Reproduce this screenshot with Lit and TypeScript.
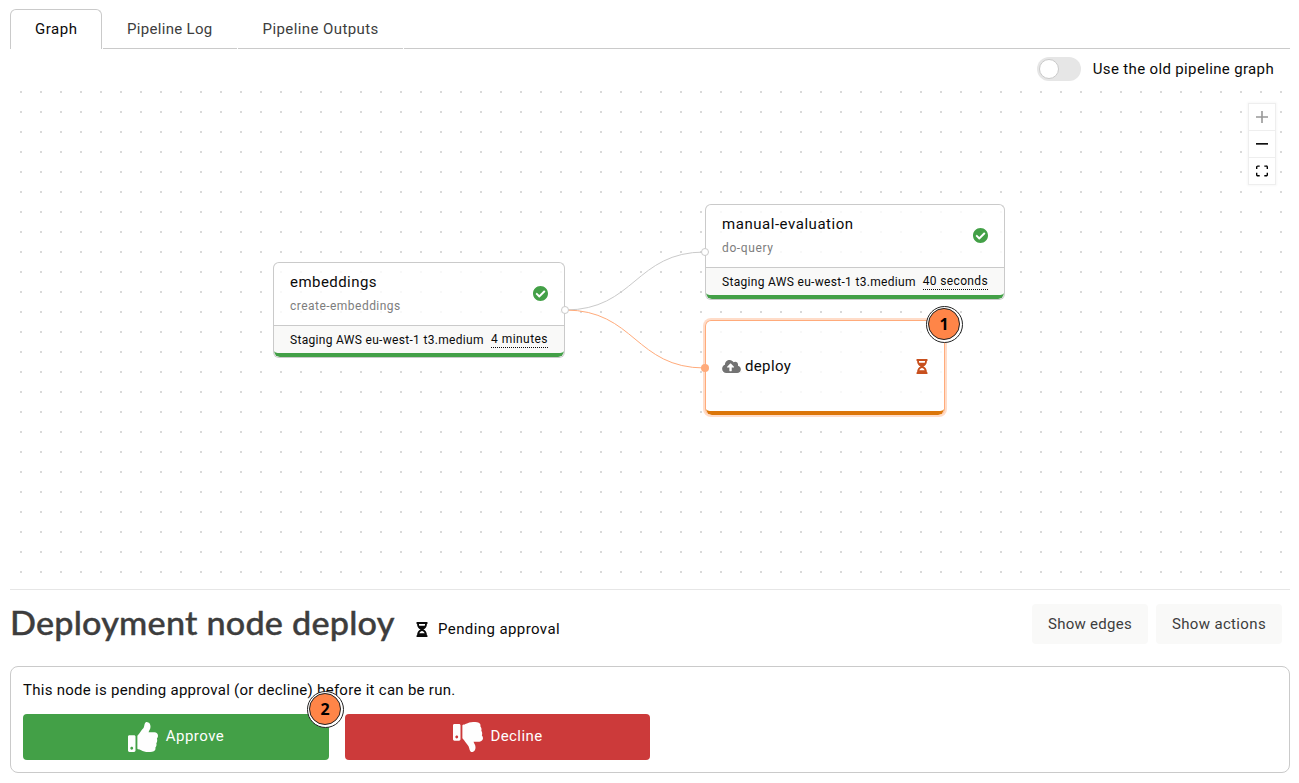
import { LitElement, html, css, svg } from "lit";
import { customElement } from "lit/decorators.js";

const CHECK = "M504 256c0 136.967-111.033 248-248 248S8 392.967 8 256 119.033 8 256 8s248 111.033 248 248zM227.314 387.314l184-184c6.248-6.248 6.248-16.379 0-22.627l-22.627-22.627c-6.248-6.249-16.379-6.249-22.628 0L216 308.118l-70.059-70.059c-6.248-6.248-16.379-6.248-22.628 0l-22.627 22.627c-6.248 6.248-6.248 16.379 0 22.627l104 104c6.249 6.249 16.379 6.249 22.628.001z";
const HOURGLASS = "M360 0H24C10.745 0 0 10.745 0 24v16c0 13.255 10.745 24 24 24 0 90.965 51.016 167.734 120.842 192C75.016 280.266 24 357.035 24 448c-13.255 0-24 10.745-24 24v16c0 13.255 10.745 24 24 24h336c13.255 0 24-10.745 24-24v-16c0-13.255-10.745-24-24-24 0-90.965-51.016-167.734-120.842-192C308.984 231.734 360 154.965 360 64c13.255 0 24-10.745 24-24V24c0-13.255-10.745-24-24-24zm-75.078 384H99.08c17.059-46.797 52.096-80 92.92-80 40.821 0 75.862 33.196 92.922 80zm.019-256H99.078C91.988 108.548 88 86.748 88 64h208c0 22.805-3.987 44.587-11.059 64z";
const CLOUD = "M537.6 226.6c4.1-10.7 6.4-22.4 6.4-34.6 0-53-43-96-96-96-19.7 0-38.1 6-53.3 16.2C367 64.2 315.3 32 256 32c-88.4 0-160 71.6-160 160 0 2.7.1 5.4.2 8.1C40.2 219.8 0 273.2 0 336c0 79.5 64.5 144 144 144h368c70.7 0 128-57.3 128-128 0-61.9-44-113.6-102.4-125.4zM393.4 288H328v112c0 8.8-7.2 16-16 16h-48c-8.8 0-16-7.2-16-16V288h-65.4c-14.3 0-21.4-17.2-11.3-27.3l105.4-105.4c6.2-6.2 16.4-6.2 22.6 0l105.4 105.4c10.1 10.1 2.9 27.3-11.3 27.3z";
const UP = "M104 224H24c-13.255 0-24 10.745-24 24v240c0 13.255 10.745 24 24 24h80c13.255 0 24-10.745 24-24V248c0-13.255-10.745-24-24-24zM64 472c-13.255 0-24-10.745-24-24s10.745-24 24-24 24 10.745 24 24-10.745 24-24 24zM384 81.452c0 42.416-25.97 66.208-33.277 94.548h101.723c33.397 0 59.397 27.746 59.553 58.098.084 17.938-7.546 37.249-19.439 49.197l-.11.11c9.836 23.337 8.237 56.037-9.308 79.469 8.681 25.895-.069 57.704-16.382 74.757 4.298 17.598 2.244 32.575-6.148 44.632C440.202 511.587 389.616 512 346.839 512l-2.845-.001c-48.287-.017-87.806-17.598-119.56-31.725-15.957-7.099-36.821-15.887-52.651-16.178-6.54-.12-11.783-5.457-11.783-11.998v-213.77c0-3.2 1.282-6.271 3.558-8.521 39.614-39.144 56.648-80.587 89.117-113.111 14.804-14.832 20.188-37.236 25.393-58.902C282.515 39.293 291.817 0 312 0c24 0 72 8 72 81.452z";
const DOWN = "M0 56v240c0 13.255 10.745 24 24 24h80c13.255 0 24-10.745 24-24V56c0-13.255-10.745-24-24-24H24C10.745 32 0 42.745 0 56zm40 200c0-13.255 10.745-24 24-24s24 10.745 24 24-10.745 24-24 24-24-10.745-24-24zm272 256c-20.183 0-29.485-39.293-33.931-57.795-5.206-21.666-10.589-44.07-25.393-58.902-32.469-32.524-49.503-73.967-89.117-113.111a11.98 11.98 0 0 1-3.558-8.521V59.901c0-6.541 5.243-11.878 11.783-11.998 15.831-.29 36.694-9.079 52.651-16.178C256.189 17.598 295.709.017 343.995 0h2.844c42.777 0 93.363.413 113.774 29.737 8.392 12.057 10.446 27.034 6.148 44.632 16.312 17.053 25.063 48.863 16.382 74.757 17.544 23.432 19.143 56.132 9.308 79.469l.11.11c11.893 11.949 19.523 31.259 19.439 49.197-.156 30.352-26.157 58.098-59.553 58.098H350.723C358.03 364.34 384 388.132 384 430.548 384 504 336 512 312 512z";
const PLUS = "M32 18.133H18.133V32h-4.266V18.133H0v-4.266h13.867V0h4.266v13.867H32z";
const MINUS = "M0 0h32v4.2H0z";
const FIT = "M3.692 4.63c0-.53.4-.938.939-.938h5.215V0H4.708C2.13 0 0 2.054 0 4.63v5.216h3.692V4.631zM27.354 0h-5.2v3.692h5.17c.53 0 .984.4.984.939v5.215H32V4.631A4.624 4.624 0 0027.354 0zm.954 24.83c0 .532-.4.94-.939.94h-5.215v3.768h5.215c2.577 0 4.631-2.13 4.631-4.707v-5.139h-3.692v5.139zm-23.677.94c-.531 0-.939-.4-.939-.94v-5.138H0v5.139c0 2.577 2.13 4.707 4.708 4.707h5.138V25.77H4.631z";

const icon = (d: string, box: string, cls: string) =>
  html`<svg class="icon ${cls}" viewBox=${box}>${svg`<path d=${d}></path>`}</svg>`;

@customElement("app-root")
export class AppRoot extends LitElement {
  static styles = css`
    :host { display: flex; flex-direction: column; height: 783px; box-sizing: border-box; padding: 9px 9px 0 10px; background: #fff; color: #0a0a0a; font: 15px/20px Roboto, "Open Sans", sans-serif; overflow: hidden; }
    * { box-sizing: border-box; }
    .icon { display: block; fill: currentColor; flex: none; }
    .t { white-space: nowrap; letter-spacing: 0.35px; }
    .graph { letter-spacing: 0.55px; }
    .tlog { letter-spacing: 0.31px; }
    .tout { letter-spacing: 0.41px; }
    .n1 { letter-spacing: 0.45px; }
    .n2 { letter-spacing: 0.54px; }
    .s1 { letter-spacing: 0.47px; }
    .s2 { letter-spacing: 0.62px; }
    .env { letter-spacing: 0.31px; }
    .d1 { letter-spacing: 0.45px; }
    .pend { letter-spacing: 0.41px; }
    .edges { letter-spacing: 0.27px; }
    .note { letter-spacing: 0.28px; }
    .yes { letter-spacing: 0.5px; }
    .dec { letter-spacing: 0.4px; }

    .tabs { display: flex; height: 40px; flex: none; }
    .tab { padding: 10px 24px; color: #3d3d3d; border-bottom: 1px solid #cacaca; margin-right: 1px; white-space: nowrap; }
    .tab.active { color: #0a0a0a; border: 1px solid #cacaca; border-bottom: 0; border-radius: 6px 6px 0 0; width: 92px; padding: 9px 24px; }
    .tab.log { width: 134px; }
    .tab.out { width: 165px; padding-left: 24.6px; padding-right: 20px; }
    .rest { flex: 1; border-bottom: 1px solid #cacaca; }
    .bar { display: flex; justify-content: flex-end; align-items: center; height: 40px; flex: none; padding-right: 16px; gap: 12px; }
    .switch { width: 44px; height: 24px; border-radius: 12px; background: #e6e6e6; padding: 2px; }
    .knob { width: 20px; height: 20px; border-radius: 50%; background: #fff; border: 1px solid #cacaca; }

    .canvas { position: relative; height: 501px; flex: none; border-bottom: 1px solid #e6e6e6; }
    .flow { position: absolute; inset: 0; width: 100%; height: 100%; }
    .ports { pointer-events: none; }
    .node { position: absolute; height: 95px; border: 1px solid #cacaca; border-bottom: 0; border-radius: 6px; background: rgba(255, 255, 255, 0.8); display: flex; flex-direction: column; overflow: hidden; box-shadow: 0 1px 0 #cacaca; }
    .node.embed { left: 263px; top: 173px; width: 292px; }
    .node.eval { left: 695px; top: 115px; width: 300px; }
    .node.deploy { left: 695px; top: 231px; width: 240px; border-color: #ffab7b; box-shadow: 0 0 0 2px #ffdcc8; }
    .head { flex: 1; display: flex; align-items: center; justify-content: space-between; padding: 0 16px 1px; }
    .deploy .head { padding-bottom: 0; }
    .names { display: flex; flex-direction: column; gap: 4px; }
    .sub { color: #7d7d7d; font-size: 12px; }
    .ok { width: 15px; height: 15px; color: #43a047; }
    .foot { height: 28px; display: flex; justify-content: space-between; align-items: center; padding: 0 16px; border-top: 1px solid #cacaca; background: #f9f9f8; font-size: 12px; line-height: 16px; }
    .time { border-bottom: 1px dotted #0a0a0a; }
    .stripe { height: 10px; margin-top: -6px; border-bottom: 4px solid #43a047; border-radius: 0 0 6px 6px; flex: none; }
    .stripe.pending { border-color: #dc7609; }
    .kind { display: flex; align-items: center; gap: 4px; }
    .cloud { width: 19px; height: 15px; color: #737373; }
    .wait { width: 12px; height: 15px; color: #c8501e; }

    .controls { position: absolute; left: 1238px; top: 14px; width: 28px; border: 1px solid #eee; background: #fff; box-shadow: 0 0 2px 1px rgba(0, 0, 0, 0.03); }
    .control { height: 27px; display: flex; align-items: center; justify-content: center; border-bottom: 1px solid #eee; }
    .control:last-child { border-bottom: 0; height: 26px; }
    .glyph { width: 12px; height: 12px; color: #000; }
    .dim { opacity: 0.4; }

    .badge { position: absolute; width: 37px; height: 37px; border-radius: 50%; border: 1.3px solid #222; background: #fff; padding: 1.3px; }
    .disc { display: block; height: 100%; border-radius: 50%; border: 1.3px solid #222; background: #ff8548; color: #000; font: 700 16px/31px "Open Sans", sans-serif; text-align: center; }
    .badge.one { left: 915.5px; top: 216.5px; }
    .badge.two { left: 295.5px; top: 23.5px; }

    .title { height: 76px; flex: none; display: flex; align-items: center; padding: 0 8px 8px 0; }
    h1 { margin: -2px 0 0; color: #3d3d3d; font: 500 32px/40px Lato, sans-serif; -webkit-text-stroke: 0.4px #3d3d3d; width: 385px; }
    .h { display: inline-block; letter-spacing: 0.2px; transform: scaleX(1.068); transform-origin: 0 50%; }
    .state { display: flex; align-items: center; gap: 10px; margin: 10px auto 0 21px; }
    .state .wait { color: #0a0a0a; }
    .btn { height: 40px; padding: 0 16px; border-radius: 4px; background: #f9f9f8; color: #3d3d3d; line-height: 40px; margin-left: 8px; }
    .panel { position: relative; height: 107px; width: 1280px; flex: none; border: 1px solid #cacaca; border-radius: 8px; padding: 13px 12px; display: flex; flex-direction: column; gap: 14px; }
    .actions { display: flex; gap: 16px; }
    .act { height: 46px; width: 306px; border-radius: 4px; background: #43a047; color: #fefefe; display: flex; align-items: center; justify-content: center; gap: 8px; }
    .act.no { width: 305px; background: #cc3a3a; }
    .act .t { padding-bottom: 2px; }
    .thumb { width: 30px; height: 30px; }
  `;

  render() {
    return html`
      <nav class="tabs">
        <div class="tab active"><span class="t graph">Graph</span></div>
        <div class="tab log"><span class="t tlog">Pipeline Log</span></div>
        <div class="tab out"><span class="t tout">Pipeline Outputs</span></div>
        <div class="rest"></div>
      </nav>
      <div class="bar">
        <div class="switch"><div class="knob"></div></div>
        <span class="t">Use the old pipeline graph</span>
      </div>
      <main class="canvas">
        <svg class="flow">
          <defs><pattern id="dots" width="20" height="20" patternUnits="userSpaceOnUse"><rect x="10" y="2" width="2" height="2" fill="#d9d9d9" /></pattern></defs>
          <rect width="1280" height="500" fill="url(#dots)" />
          <path d="M555 221C625 221 625 163 695 163" fill="none" stroke="#cacaca" />
          <path d="M555 221C625 221 625 279 695 279" fill="none" stroke="#ffab7b" />
        </svg>
        <section class="node embed">
          <div class="head">
            <div class="names"><span class="t n1">embeddings</span><span class="t sub s1">create-embeddings</span></div>
            ${icon(CHECK, "8 8 496 496", "ok")}
          </div>
          <div class="foot"><span class="t env">Staging AWS eu-west-1 t3.medium</span><span class="t time d1">4 minutes</span></div>
          <div class="stripe"></div>
        </section>
        <section class="node eval">
          <div class="head">
            <div class="names"><span class="t n2">manual-evaluation</span><span class="t sub s2">do-query</span></div>
            ${icon(CHECK, "8 8 496 496", "ok")}
          </div>
          <div class="foot"><span class="t env">Staging AWS eu-west-1 t3.medium</span><span class="t time">40 seconds</span></div>
          <div class="stripe"></div>
        </section>
        <section class="node deploy">
          <div class="head">
            <div class="kind">${icon(CLOUD, "0 0 640 512", "cloud")}<span class="t">deploy</span></div>
            ${icon(HOURGLASS, "0 0 384 512", "wait")}
          </div>
          <div class="stripe pending"></div>
        </section>
        <svg class="flow ports">
          <circle cx="555" cy="221" r="3.5" fill="#fff" stroke="#cacaca" />
          <circle cx="695" cy="163" r="3.5" fill="#fff" stroke="#cacaca" />
          <circle cx="695" cy="279" r="4" fill="#ffab7b" />
        </svg>
        <div class="badge one"><span class="disc">1</span></div>
        <div class="controls">
          <div class="control">${icon(PLUS, "0 0 32 32", "glyph dim")}</div>
          <div class="control">${icon(MINUS, "0 0 32 5", "glyph")}</div>
          <div class="control">${icon(FIT, "0 0 32 30", "glyph")}</div>
        </div>
      </main>
      <header class="title">
        <h1><span class="t h">Deployment node deploy</span></h1>
        <div class="state">${icon(HOURGLASS, "0 0 384 512", "wait")}<span class="t pend">Pending approval</span></div>
        <div class="btn"><span class="t edges">Show edges</span></div>
        <div class="btn"><span class="t">Show actions</span></div>
      </header>
      <section class="panel">
        <span class="t note">This node is pending approval (or decline) before it can be run.</span>
        <div class="actions">
          <div class="act">${icon(UP, "0 0 512 512", "thumb")}<span class="t yes">Approve</span></div>
          <div class="act no">${icon(DOWN, "0 0 512 512", "thumb")}<span class="t dec">Decline</span></div>
        </div>
        <div class="badge two"><span class="disc">2</span></div>
      </section>
    `;
  }
}
